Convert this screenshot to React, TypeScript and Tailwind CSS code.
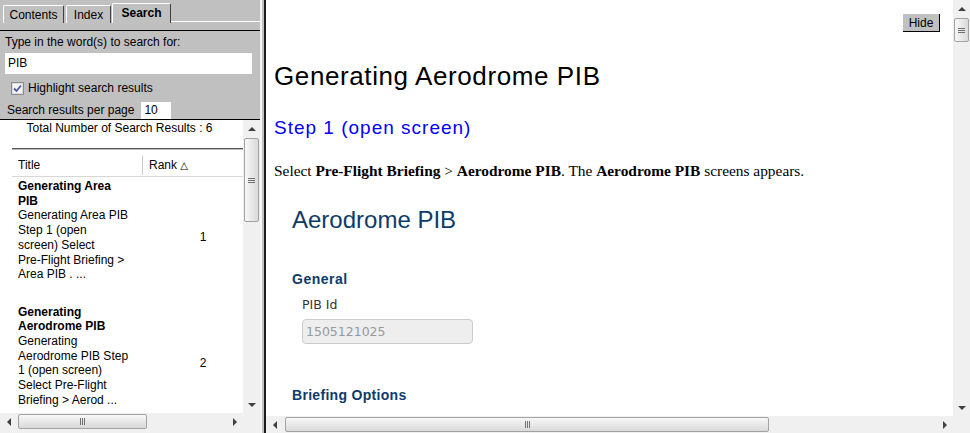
import React from "react";

const sans = "font-['Liberation_Sans',Arial,sans-serif]";
const serif = "font-['Liberation_Serif','Times_New_Roman',serif]";
const verdana = "font-['DejaVu_Sans',Verdana,sans-serif]";

function Arrow({ dir }: { dir: "up" | "down" | "left" | "right" }) {
  if (dir === "up")
    return <div className="h-0 w-0 border-x-[4px] border-b-[4px] border-x-transparent border-b-[#404040]" />;
  if (dir === "down")
    return <div className="h-0 w-0 border-x-[4px] border-t-[4px] border-x-transparent border-t-[#404040]" />;
  if (dir === "left")
    return <div className="h-0 w-0 border-y-[4px] border-r-[4px] border-y-transparent border-r-[#404040]" />;
  return <div className="h-0 w-0 border-y-[4px] border-l-[4px] border-y-transparent border-l-[#404040]" />;
}

function VScroll({ thumb }: { thumb: string }) {
  return (
    <div className="flex h-full w-[17px] shrink-0 flex-col bg-[#f0f0f0]">
      <div className="flex h-[17px] shrink-0 items-center justify-center">
        <Arrow dir="up" />
      </div>
      <div
        className={`mx-[1px] flex shrink-0 items-center justify-center rounded-[2px] border border-[#a3a3a3] bg-linear-to-r from-[#f8f8f8] to-[#d9d9d9] ${thumb}`}
      >
        <div className="flex flex-col gap-[1px]">
          <div className="h-px w-[7px] bg-[#707070]" />
          <div className="h-px w-[7px] bg-[#707070]" />
          <div className="h-px w-[7px] bg-[#707070]" />
        </div>
      </div>
      <div className="flex-1" />
      <div className="flex h-[17px] shrink-0 items-center justify-center">
        <Arrow dir="down" />
      </div>
    </div>
  );
}

function HScroll({ thumb }: { thumb: string }) {
  return (
    <div className="flex h-[17px] min-w-0 flex-1 bg-[#f0f0f0]">
      <div className="flex w-[17px] shrink-0 items-center justify-center">
        <Arrow dir="left" />
      </div>
      <div
        className={`my-[1px] flex shrink-0 items-center justify-center rounded-[2px] border border-[#a3a3a3] bg-linear-to-b from-[#f8f8f8] to-[#d9d9d9] ${thumb}`}
      >
        <div className="flex gap-[1px]">
          <div className="h-[7px] w-px bg-[#707070]" />
          <div className="h-[7px] w-px bg-[#707070]" />
          <div className="h-[7px] w-px bg-[#707070]" />
        </div>
      </div>
      <div className="flex-1" />
      <div className="flex w-[17px] shrink-0 items-center justify-center">
        <Arrow dir="right" />
      </div>
    </div>
  );
}

const results = [
  {
    rank: "1",
    title: ["Generating Area", "PIB"],
    summary: [
      "Generating Area PIB",
      "Step 1 (open",
      "screen) Select",
      "Pre-Flight Briefing >",
      "Area PIB . ...",
    ],
  },
  {
    rank: "2",
    title: ["Generating", "Aerodrome PIB"],
    summary: [
      "Generating",
      "Aerodrome PIB Step",
      "1 (open screen)",
      "Select Pre-Flight",
      "Briefing > Aerod ...",
    ],
  },
];

function SidePanel() {
  return (
    <div className="flex h-full w-[260px] shrink-0 flex-col bg-[#c0c0c0]">
      {/* tabs */}
      <div className="flex h-[23px] shrink-0 items-end pl-[3px]">
        <div className="flex h-[18px] w-[61px] items-center justify-center rounded-t-[2px] border-l border-t border-r border-white border-r-[#404040]">
          Contents
        </div>
        <div className="ml-[2px] flex h-[18px] w-[45px] items-center justify-center rounded-t-[2px] border-l border-t border-r border-white border-r-[#404040]">
          Index
        </div>
        <div className="ml-px flex h-[20px] w-[59px] items-center justify-center rounded-t-[2px] border-l border-t border-r border-white border-r-[#404040] pb-[1px] font-bold">
          Search
        </div>
        <div className="h-[2px] flex-1 border-t border-white" />
      </div>
      <div className="h-[7px] shrink-0" />
      <div className="h-px shrink-0 bg-black" />

      {/* search form */}
      <div className="flex shrink-0 flex-col pl-[5px]">
        <div className="mt-[4px]">Type in the word(s) to search for:</div>
        <div className="mt-[4px] h-[21px] w-[247px] bg-white pl-[3px] leading-[21px]">PIB</div>
        <div className="mt-[7px] flex h-[14px] items-center pl-[6px]">
          <svg width="13" height="13" viewBox="0 0 13 13">
            <rect x="0.5" y="0.5" width="12" height="12" fill="#f4f4f4" stroke="#8a8a8a" />
            <rect x="1.5" y="1.5" width="10" height="10" fill="none" stroke="#dcdcdc" />
            <path d="M3 6.5 L5.5 9 L10 3.5" fill="none" stroke="#4a5aa8" strokeWidth="1.8" />
          </svg>
          <span className="ml-[4px]">Highlight search results</span>
        </div>
        <div className="mt-[6px] flex h-[18px] items-center pl-[2px]">
          <span>Search results per page</span>
          <div className="ml-[7px] h-[17px] w-[30px] bg-white pl-[3px] leading-[17px]">10</div>
        </div>
      </div>
      <div className="h-px shrink-0 bg-black" />

      {/* results */}
      <div className="flex min-h-0 flex-1">
        <div className="flex w-[243px] flex-col overflow-hidden bg-white">
          <div className="pt-[1px] pr-[4px] text-center whitespace-nowrap">
            Total Number of Search Results : 6
          </div>
          <div className="ml-[12px] mt-[13px] h-[2px] w-[252px] shrink-0 border-t border-[#555555] bg-[#bdbdbd]" />
          <div className="ml-[12px] grid h-[27px] w-[252px] shrink-0 grid-cols-[130px_122px] border-b border-[#d6d6d6]">
            <div className="pl-[6px] pt-[8px]">Title</div>
            <div className="mt-[6px] h-[19px] border-l border-[#c8c8c8] pl-[6px] pt-[2px] whitespace-nowrap">
              Rank <span className={`${verdana} text-[10px]`}>△</span>
            </div>
          </div>
          <div className="ml-[12px] w-[252px] shrink-0 pt-[2px]">
            {results.map((r) => (
              <div key={r.rank} className="grid grid-cols-[130px_122px] pb-[8px] leading-[14.7px]">
                <div className="pl-[6px] whitespace-nowrap">
                  {r.title.map((t) => (
                    <div key={t} className="font-bold">
                      {t}
                    </div>
                  ))}
                  {r.summary.map((s) => (
                    <div key={s}>{s}</div>
                  ))}
                  <div className="h-[14.7px]" />
                </div>
                <div className="flex items-center justify-center">{r.rank}</div>
              </div>
            ))}
          </div>
        </div>
        <VScroll thumb="mt-[1px] h-[84px]" />
      </div>
      <div className="flex h-[20px] shrink-0 items-start bg-[#f0f0f0]">
        <HScroll thumb="ml-[1px] w-[129px]" />
        <div className="h-full w-[17px] shrink-0 bg-[#f0f0f0]" />
      </div>
    </div>
  );
}

function Topic() {
  return (
    <div className="grid h-full flex-1 grid-cols-[687px_17px] grid-rows-[416px_17px]">
      <div className="flex flex-col overflow-hidden bg-white pl-[8px]">
        <div className="flex justify-end pt-[14px] pr-[13px]">
          <button
            type="button"
            className="h-[18px] w-[37px] border-r border-b border-black bg-[#c0c0c0] text-[12px] leading-[16px]"
          >
            Hide
          </button>
        </div>
        <h1 className="mt-[31px] text-[26px] leading-[26px] font-normal tracking-[0.6px] whitespace-nowrap">
          Generating Aerodrome PIB
        </h1>
        <h2 className="mt-[29px] text-[19px] leading-[19px] font-normal tracking-[1px] whitespace-nowrap text-[#0000ff]">
          Step 1 (open screen)
        </h2>
        <p className={`mt-[26px] ${serif} text-[15.4px] leading-[15px] whitespace-nowrap`}>
          Select <b>Pre-Flight Briefing</b> &gt; <b>Aerodrome PIB</b>. The <b>Aerodrome PIB</b> screens appears.
        </p>

        <div className="ml-[18px] flex flex-col text-[#0c3b6c]">
          <div className="mt-[30px] text-[24px] leading-[24px] whitespace-nowrap">Aerodrome PIB</div>
          <div className="mt-[40px] text-[14px] leading-[14px] font-bold tracking-[0.5px]">General</div>
          <div className={`mt-[12px] ml-[10px] ${verdana} text-[12.5px] leading-[13px] text-[#333333]`}>
            PIB Id
          </div>
          <div
            className={`mt-[8px] ml-[10px] h-[25px] w-[171px] rounded-[4px] border border-[#cccccc] bg-[#eeeeee] pl-[3px] ${verdana} text-[12.5px] leading-[23px] text-[#999999]`}
          >
            1505121025
          </div>
          <div className="mt-[44px] text-[14px] leading-[14px] font-bold tracking-[0.3px] whitespace-nowrap">
            Briefing Options
          </div>
        </div>
      </div>
      <VScroll thumb="mt-[1px] h-[24px]" />
      <div className="flex">
        <HScroll thumb="ml-[2px] w-[484px]" />
      </div>
      <div className="bg-[#f0f0f0]" />
    </div>
  );
}

export default function App() {
  return (
    <div className={`flex h-[433px] w-[970px] overflow-hidden bg-white text-[12px] leading-[14px] text-black ${sans}`}>
      <SidePanel />
      <div className="flex w-[6px] shrink-0">
        <div className="w-[2px] bg-[#f4f4f4]" />
        <div className="w-[2px] bg-[#c0c0c0]" />
        <div className="w-[2px] bg-[#1c1c1c]" />
      </div>
      <Topic />
    </div>
  );
}
